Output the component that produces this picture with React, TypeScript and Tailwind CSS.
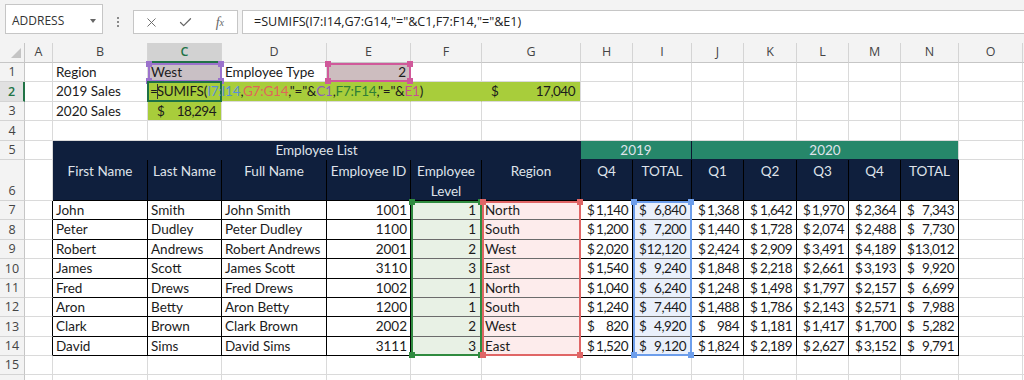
import { Fragment } from "react";
import type { ReactNode } from "react";
import { X, Check } from "lucide-react";

const COLS = ["A", "B", "C", "D", "E", "F", "G", "H", "I", "J", "K", "L", "M", "N", "O"];

const employees = [
  { first: "John", last: "Smith", full: "John Smith", id: "1001", level: "1", region: "North", q4: "1,140", total19: "6,840", q: ["1,368", "1,642", "1,970", "2,364"], total20: "7,343" },
  { first: "Peter", last: "Dudley", full: "Peter Dudley", id: "1100", level: "1", region: "South", q4: "1,200", total19: "7,200", q: ["1,440", "1,728", "2,074", "2,488"], total20: "7,730" },
  { first: "Robert", last: "Andrews", full: "Robert Andrews", id: "2001", level: "2", region: "West", q4: "2,020", total19: "12,120", q: ["2,424", "2,909", "3,491", "4,189"], total20: "13,012" },
  { first: "James", last: "Scott", full: "James Scott", id: "3110", level: "3", region: "East", q4: "1,540", total19: "9,240", q: ["1,848", "2,218", "2,661", "3,193"], total20: "9,920" },
  { first: "Fred", last: "Drews", full: "Fred Drews", id: "1002", level: "1", region: "North", q4: "1,040", total19: "6,240", q: ["1,248", "1,498", "1,797", "2,157"], total20: "6,699" },
  { first: "Aron", last: "Betty", full: "Aron Betty", id: "1200", level: "1", region: "South", q4: "1,240", total19: "7,440", q: ["1,488", "1,786", "2,143", "2,571"], total20: "7,988" },
  { first: "Clark", last: "Brown", full: "Clark Brown", id: "2002", level: "2", region: "West", q4: "820", total19: "4,920", q: ["984", "1,181", "1,417", "1,700"], total20: "5,282" },
  { first: "David", last: "Sims", full: "David Sims", id: "3111", level: "3", region: "East", q4: "1,520", total19: "9,120", q: ["1,824", "2,189", "2,627", "3,152"], total20: "9,791" },
];

const headers = ["First Name", "Last Name", "Full Name", "Employee ID", "Employee Level", "Region", "Q4", "TOTAL", "Q1", "Q2", "Q3", "Q4", "TOTAL"];

type Tone = "green" | "red" | "blue";
const toneLine: Record<Tone, string> = {
  green: "border-[#2f8b3f]",
  red: "border-[#e06666]",
  blue: "border-[#6d9eeb]",
};
const toneHandle: Record<Tone, string> = {
  green: "bg-[#2f8b3f]",
  red: "bg-[#e06666]",
  blue: "bg-[#6d9eeb]",
};

function Cell({
  r = "border-r-[#dadada]",
  b = "border-b-[#dadada]",
  className = "",
  children,
}: {
  r?: string;
  b?: string;
  className?: string;
  children?: ReactNode;
}) {
  return (
    <div className={`relative flex min-w-0 items-center whitespace-nowrap border-r border-b ${r} ${b} ${className}`}>
      {children}
    </div>
  );
}

function Handle({ className }: { className: string }) {
  return <span className={`absolute size-[6px] ${className}`} />;
}

// coloured box drawn by Excel around a referenced cell
function RefBox({ line, handle }: { line: string; handle: string }) {
  return (
    <span className={`pointer-events-none absolute left-0 top-0 -right-px -bottom-px z-10 border-2 ${line}`}>
      <Handle className={`-left-[4px] -top-[4px] ${handle}`} />
      <Handle className={`-right-[4px] -top-[4px] ${handle}`} />
      <Handle className={`-left-[4px] -bottom-[4px] ${handle}`} />
      <Handle className={`-right-[4px] -bottom-[4px] ${handle}`} />
    </span>
  );
}

function RangeEdge({ tone, first, last }: { tone: Tone; first: boolean; last: boolean }) {
  return (
    <span
      className={`pointer-events-none absolute left-0 top-0 -right-px -bottom-px z-10 border-x-2 ${first ? "border-t-2" : ""} ${last ? "border-b-2" : ""} ${toneLine[tone]}`}
    >
      {first && (
        <>
          <Handle className={`-left-[4px] -top-[4px] ${toneHandle[tone]}`} />
          <Handle className={`-right-[4px] -top-[4px] ${toneHandle[tone]}`} />
        </>
      )}
      {last && (
        <>
          <Handle className={`-left-[4px] -bottom-[4px] ${toneHandle[tone]}`} />
          <Handle className={`-right-[4px] -bottom-[4px] ${toneHandle[tone]}`} />
        </>
      )}
    </span>
  );
}

function Money({ v, className = "" }: { v: string; className?: string }) {
  return (
    <div className={`relative z-0 flex w-full justify-between tracking-[-0.5px] ${className}`}>
      <span>$</span>
      <span>{v}</span>
    </div>
  );
}

function RowHead({ n, active = false }: { n?: number; active?: boolean }) {
  return (
    <div
      className={`flex items-end justify-center border-b border-b-[#d4d4d4] pb-[1px] font-['Open_Sans',sans-serif] text-[12.5px] leading-[17px] ${
        active ? "border-r-2 border-r-[#217346] bg-[#e1e1e1] font-semibold text-[#217346]" : "border-r border-r-[#c6c6c6] bg-[#f3f3f3] text-[#444]"
      }`}
    >
      {n}
    </div>
  );
}

function ColHead({ c }: { c: string }) {
  const active = c === "C";
  return (
    <div
      className={`flex items-center justify-center border-r border-r-[#d4d4d4] font-['Open_Sans',sans-serif] text-[12.5px] ${
        active ? "border-b-2 border-b-[#217346] bg-[#d2d2d2] font-semibold text-[#217346]" : "border-b border-b-[#c6c6c6] bg-[#f3f3f3] text-[#444]"
      }`}
    >
      {c}
    </div>
  );
}

function Blanks({ n, id }: { n: number; id: string }) {
  return (
    <>
      {Array.from({ length: n }, (_, i) => (
        <Cell key={id + i} />
      ))}
    </>
  );
}

function FormulaBar() {
  return (
    <div className="flex h-[43px] items-start bg-[#f3f3f3] pt-[4px] font-['Open_Sans',sans-serif] text-[#333]">
      <div className="ml-[5px] flex h-[30px] w-[98px] items-center justify-between border border-[#c6c6c6] bg-white pl-[6px] pr-[6px] pt-[4px]">
        <span className="text-[12px]">ADDRESS</span>
        <span className="h-0 w-0 border-x-[3.5px] border-t-[4px] border-x-transparent border-t-[#666]" />
      </div>
      <div className="flex h-[30px] w-[30px] flex-col items-center justify-center gap-[2px] pt-[6px]">
        <span className="size-[2px] bg-[#8a8a8a]" />
        <span className="size-[2px] bg-[#8a8a8a]" />
        <span className="size-[2px] bg-[#8a8a8a]" />
      </div>
      <div className="mt-[6px] flex h-[24px] w-[105px] border border-[#c6c6c6] bg-white text-[#666]">
        <span className="flex w-[35px] items-center justify-center">
          <X size={15} strokeWidth={1.5} />
        </span>
        <span className="flex w-[35px] items-center justify-center">
          <Check size={15} strokeWidth={2} />
        </span>
        <span className="flex w-[35px] items-center justify-center font-['Liberation_Serif',serif] text-[14px] italic">
          f<span className="text-[10px]">x</span>
        </span>
      </div>
      <div className="-mr-[4px] ml-[4px] mt-[6px] flex h-[24px] flex-1 items-center border border-[#c6c6c6] bg-white pl-[11px] text-[12.6px] text-[#222]">
        {'=SUMIFS(I7:I14,G7:G14,"="&C1,F7:F14,"="&E1)'}
      </div>
    </div>
  );
}

export default function App() {
  return (
    <div className="h-[380px] w-[1024px] overflow-hidden bg-white font-['Lato',sans-serif] text-[13.5px] text-[#1b1b1b]">
      <FormulaBar />
      <div className="grid grid-cols-[25px_28px_95px_74px_105px_84px_71px_99px_52px_59px_52px_53px_52px_52px_58px_64px_40px] grid-rows-[20px_repeat(5,19.4px)_41px_repeat(10,19.4px)]">
        {/* column letters */}
        <div className="relative border-r border-b border-r-[#c6c6c6] border-b-[#c6c6c6] bg-[#f3f3f3]">
          <span className="absolute bottom-[4px] right-[3px] h-0 w-0 border-b-[10px] border-l-[10px] border-b-[#c4c4c4] border-l-transparent" />
        </div>
        {COLS.map((c) => (
          <ColHead key={c} c={c} />
        ))}
        <div className="border-b border-b-[#c6c6c6] bg-[#f3f3f3]" />

        {/* row 1 */}
        <RowHead n={1} />
        <Cell />
        <Cell className="pl-[3px]">Region</Cell>
        <Cell className="bg-[#c9c0c5] pl-[3px]">
          West
          <RefBox line="border-[#9b72cc]" handle="bg-[#9b72cc]" />
        </Cell>
        <Cell className="pl-[3px]">Employee Type</Cell>
        <Cell className="justify-end bg-[#cdbdbf] pr-[4px]">
          2
          <RefBox line="border-[#d0599a]" handle="bg-[#d0599a]" />
        </Cell>
        <Blanks n={11} id="r1" />

        {/* row 2 */}
        <RowHead n={2} active />
        <Cell />
        <Cell className="pl-[3px]">2019 Sales</Cell>
        <Cell r="border-r-[#a8cd3b]" className="z-10 overflow-visible bg-[#a8cd3b] pl-[2px]">
          <span className="relative z-10 tracking-[-0.2px]">
            =<span className="-ml-px mr-[-1px] inline-block h-[15px] w-px translate-y-[3px] bg-[#333]" />
            SUMIFS(<span className="text-[#5b8fd6]">I7:I14</span>,<span className="text-[#e0655a]">G7:G14</span>,{'"="&'}
            <span className="text-[#8e5cc0]">C1</span>,<span className="text-[#2f7f35]">F7:F14</span>,{'"="&'}
            <span className="text-[#c94f93]">E1</span>)
          </span>
          <span className="pointer-events-none absolute -left-px -top-px -right-px -bottom-px border-2 border-[#1e7145]" />
        </Cell>
        <Cell r="border-r-[#a8cd3b]" className="bg-[#a8cd3b]" />
        <Cell r="border-r-[#a8cd3b]" className="bg-[#a8cd3b]" />
        <Cell r="border-r-[#a8cd3b]" className="bg-[#a8cd3b]" />
        <Cell className="bg-[#a8cd3b]">
          <Money v="17,040" className="pl-[9px] pr-[5px]" />
        </Cell>
        <Blanks n={9} id="r2" />

        {/* row 3 */}
        <RowHead n={3} />
        <Cell />
        <Cell className="pl-[3px]">2020 Sales</Cell>
        <Cell className="bg-[#a8cd3b]">
          <Money v="18,294" className="pl-[9px] pr-[5px]" />
        </Cell>
        <Blanks n={13} id="r3" />

        {/* row 4 */}
        <RowHead n={4} />
        <Blanks n={16} id="r4" />

        {/* row 5 */}
        <RowHead n={5} />
        <Cell />
        <Cell r="border-r-[#0f1f3d]" b="border-b-[#0f1f3d]" className="col-span-6 justify-center bg-[#0f1f3d] text-[#dfe3ea]">
          Employee List
        </Cell>
        <Cell r="border-r-[#0b1630]" b="border-b-[#0f1f3d]" className="col-span-2 justify-center bg-[#26876a] text-[#dfe3ea]">
          2019
        </Cell>
        <Cell b="border-b-[#0f1f3d]" className="col-span-5 justify-center bg-[#26876a] text-[#dfe3ea]">
          2020
        </Cell>
        <Blanks n={2} id="r5" />

        {/* row 6 */}
        <RowHead n={6} />
        <Cell />
        {headers.map((h, i) => (
          <Cell
            key={h + i}
            r="border-r-black"
            b="border-b-black"
            className="items-start justify-center whitespace-normal bg-[#0f1f3d] px-[2px] pt-[1px] text-center leading-[20px] text-[#dfe3ea]"
          >
            {h === "Employee Level" ? (
              <span>
                Employee
                <br />
                Level
              </span>
            ) : (
              h
            )}
          </Cell>
        ))}
        <Blanks n={2} id="r6" />

        {/* rows 7-14 */}
        {employees.map((e, i) => {
          const first = i === 0;
          const last = i === employees.length - 1;
          const n = i + 7;
          const soft = last ? "border-b-black" : "border-b-[#6b6b6b]";
          return (
            <Fragment key={n}>
              <RowHead n={n} />
              <Cell r="border-r-black" />
              <Cell r="border-r-black" b="border-b-black" className="pl-[3px]">
                {e.first}
              </Cell>
              <Cell r="border-r-black" b="border-b-black" className="pl-[3px]">
                {e.last}
              </Cell>
              <Cell r="border-r-black" b="border-b-black" className="pl-[3px]">
                {e.full}
              </Cell>
              <Cell r="border-r-black" b="border-b-black" className="justify-end pr-[3px]">
                {e.id}
              </Cell>
              <Cell r="border-r-[#6b6b6b]" b={soft} className="justify-end bg-[#e8f1e5] pr-[5px]">
                {e.level}
                <RangeEdge tone="green" first={first} last={last} />
              </Cell>
              <Cell r="border-r-black" b={soft} className="bg-[#fdecec] pl-[3px]">
                {e.region}
                <RangeEdge tone="red" first={first} last={last} />
              </Cell>
              <Cell r="border-r-black" b="border-b-black">
                <Money v={e.q4} className="pl-[6px] pr-[4px]" />
              </Cell>
              <Cell r="border-r-black" b={soft} className="bg-[#eaf0fb]">
                <Money v={e.total19} className="pl-[6px] pr-[5px]" />
                <RangeEdge tone="blue" first={first} last={last} />
              </Cell>
              {e.q.map((q, j) => (
                <Cell key={j} r="border-r-black" b="border-b-black">
                  <Money v={q} className="pl-[6px] pr-[4px]" />
                </Cell>
              ))}
              <Cell r="border-r-black" b="border-b-black">
                <Money v={e.total20} className="pl-[6px] pr-[4px]" />
              </Cell>
              <Cell />
              <Cell />
            </Fragment>
          );
        })}

        {/* rows 15-16 (16 is cut off by the window) */}
        <RowHead n={15} />
        <Blanks n={16} id="r15" />
        <RowHead />
        <Blanks n={16} id="r16" />
      </div>
    </div>
  );
}
